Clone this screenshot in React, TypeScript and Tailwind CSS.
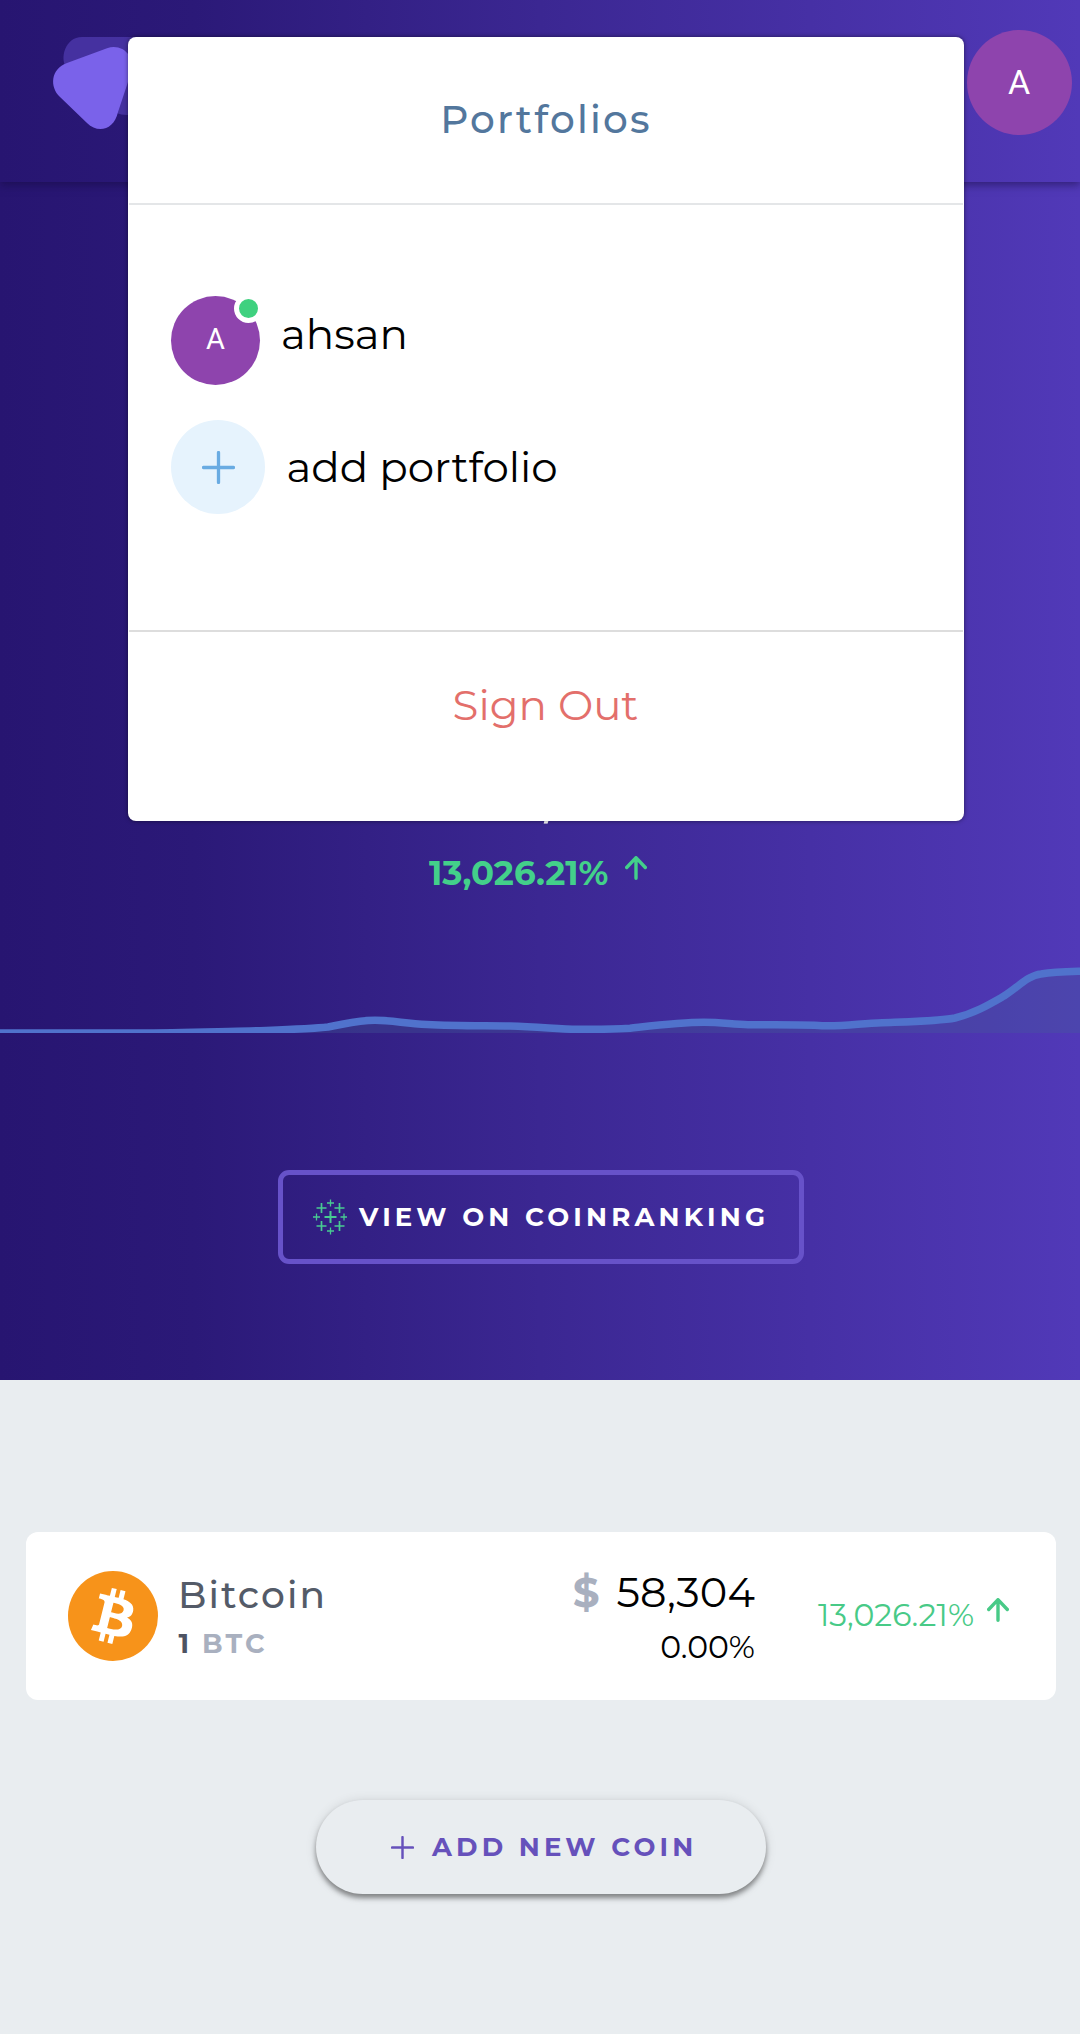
function Logo() {
  return (
    <svg className="h-[182px] w-[180px]" viewBox="0 0 180 182" fill="none">
      <path d="M82 37H150C162 37 168 45 168 57V97C168 109 160 115 150 115H127C119 115 113 112 107 106L67 69C59 59 65 37 82 37Z" fill="#4531a0" />
      <path d="M67 63L107 48.3C122 43 136 56 131 73L118 112C114 130 98 134 87 123L60 97C49.500 87 50.500 69 67 63Z" fill="#7a62ea" />
    </svg>
  );
}

function ArrowUp({ className }: { className: string }) {
  return (
    <svg className={className} viewBox="0 0 22 24" fill="none" stroke="currentColor" strokeWidth="3.4" strokeLinecap="round" strokeLinejoin="round">
      <path d="M1.7 11.5L11 1.7L20.3 11.5M11 2V22.3" />
    </svg>
  );
}

function Plus({ className, weight }: { className: string; weight: number }) {
  return (
    <svg className={className} viewBox="0 0 32 32" fill="none" stroke="currentColor" strokeWidth={weight} strokeLinecap="round">
      <path d="M16 1.5V30.5M1.5 16H30.5" />
    </svg>
  );
}

function BitcoinIcon() {
  return (
    <svg className="h-[90px] w-[90px]" viewBox="0 0 32 32">
      <circle cx="16" cy="16" r="16" fill="#f7931a" />
      <path
        fill="#fff"
        d="M23.189 14.02c.314-2.096-1.283-3.223-3.465-3.975l.708-2.84-1.728-.43-.69 2.765c-.454-.114-.92-.22-1.385-.326l.695-2.783L15.596 6l-.708 2.839c-.376-.086-.746-.17-1.104-.26l.002-.009-2.384-.595-.46 1.846s1.283.294 1.256.312c.7.175.826.638.805 1.006l-.806 3.235c.048.012.11.03.18.057l-.183-.045-1.13 4.532c-.086.212-.303.531-.793.41.018.025-1.256-.313-1.256-.313l-.858 1.978 2.25.561c.418.105.828.215 1.231.318l-.715 2.872 1.727.43.708-2.84c.472.127.93.245 1.378.357l-.706 2.828 1.728.43.715-2.866c2.948.558 5.164.333 6.097-2.333.752-2.146-.037-3.385-1.588-4.192 1.13-.26 1.98-1.003 2.207-2.538zm-3.95 5.538c-.533 2.147-4.148.986-5.32.695l.95-3.805c1.172.293 4.929.872 4.37 3.11zm.535-5.569c-.487 1.953-3.495.96-4.47.717l.86-3.45c.975.243 4.118.696 3.61 2.733z"
      />
    </svg>
  );
}

function CoinrankingIcon() {
  return (
    <svg className="h-[36px] w-[34px]" viewBox="0 0 34 36" fill="none" stroke="#48cb92">
      <path strokeWidth="2" d="M17.500 12V24M11.500 18H23.500" />
      <path strokeWidth="1.7" d="M8.500 4V14M3.500 9H13.500M26.500 4V14M21.500 9H31.500M8.500 22V32M3.500 27H13.500M26.500 22V32M21.500 27H31.500" />
      <path strokeWidth="1.3" d="M17.500 .5V7.5M14 4H21M17.500 28.5V35.5M14 32H21M3.500 14.5V21.5M0 18H7M31 14.5V21.5M27.500 18H34" />
    </svg>
  );
}

function Chart() {
  const line =
    "M-5 103H138C180 103 220 101.5 250 101C290 99.5 310 99 328 97C350 93 358 90.3 375 90.3C392 90.3 405 93.5 427 94.5C455 96 480 95.6 510 96C540 97 560 99 578 99.3C600 99.5 615 99.3 630 98.3C655 95.5 680 92.3 704 92.3C722 92.3 733 94.5 748 94.7C775 95 805 94.5 822 95.7C845 96.5 862 93 882 92.7C915 91.5 940 91 955 88C975 83 990 74 1004 66C1018 57 1028 45.5 1041 44C1055 41.5 1068 41.5 1085 41";
  return (
    <svg className="mt-[37px] block h-[103px] w-full" viewBox="0 0 1080 103" fill="none">
      <path d={`${line}V103H-5Z`} fill="#5072cc" fillOpacity="0.15" />
      <path d={`${line}V103H-5Z`} fill="#3d5b78" fillOpacity="0.18" />
      <path d={line} stroke="#5072cc" strokeWidth="7.5" />
    </svg>
  );
}

function PortfolioMenu() {
  return (
    <div className="absolute top-[37px] left-[128px] flex h-[784px] w-[836px] flex-col rounded-lg bg-white px-px shadow-[0_0_4px_rgba(0,0,0,0.5)]">
      <div className="flex h-[166px] items-center justify-center pb-[2px] text-[39px] font-medium tracking-[2.23px] text-[#53779d]">Portfolios</div>
      <div className="flex h-[429px] flex-col gap-[35px] border-t-2 border-b-2 border-t-[#e4e6e8] border-b-[#dddddd] pt-[91px] pl-[42px] text-[42px] text-black">
        <div className="flex h-[89px] items-center gap-[21px]">
          <div className="relative flex size-[89px] items-center justify-center rounded-full bg-[#8e44ad] pb-[2px] font-[Roboto] text-[29px] text-white">
            A
            <span className="absolute -top-[2px] left-[63px] size-[29px] rounded-full border-[5px] border-white bg-[#3fd17f]" />
          </div>
          <span className="pb-[13px]">ahsan</span>
        </div>
        <div className="flex h-[94px] items-center gap-[21.5px]">
          <div className="flex size-[94px] items-center justify-center rounded-full bg-[#e6f3fd] text-[#69abe2]">
            <Plus className="size-[33px]" weight={3.2} />
          </div>
          <span>add portfolio</span>
        </div>
      </div>
      <div className="flex h-[147px] items-center justify-center pr-px text-[42px] text-[#e36f6b]">Sign Out</div>
    </div>
  );
}

export default function App() {
  return (
    <div className="relative flex h-[2034px] w-[1080px] flex-col overflow-hidden bg-[#e9edf0] font-[Montserrat,Inter,sans-serif] whitespace-nowrap">
      <section className="flex h-[1380px] flex-col bg-[linear-gradient(90deg,#271571_0%,#2b1978_18%,#3b2792_50%,#5139b8_100%)]">
        <header className="flex h-[182px] shrink-0 items-start justify-between pr-[8px] shadow-[0_3px_8px_rgba(20,10,60,0.5)]">
          <Logo />
          <div className="mt-[30px] flex size-[105px] items-center justify-center rounded-full bg-[#8e44ad] pr-px pb-px font-[Roboto] text-[34px] text-white">A</div>
        </header>
        <div className="mt-[562px] flex h-[80px] items-center gap-[36px] pl-[355px] text-[80px] leading-[80px] text-white">
          <span className="font-bold">$</span>
          <span>58,304</span>
        </div>
        <div className="mt-[29px] flex h-[40px] pl-[429px] text-[34px] leading-[40px] font-bold text-[#43d08a]">
          <span>13,026.21%</span>
          <ArrowUp className="mt-[3px] ml-[17px] h-[24px] w-[22px]" />
        </div>
        <Chart />
        <button className="mt-[137px] ml-[278px] flex h-[94px] w-[526px] items-center gap-[12px] rounded-[11px] border-5 border-[#6752c9] pl-[30px] text-[26px] font-bold tracking-[4.17px] text-white">
          <CoinrankingIcon />
          <span>VIEW ON COINRANKING</span>
        </button>
      </section>

      <div className="mt-[152px] ml-[26px] flex h-[168px] w-[1030px] items-start rounded-xl bg-white pr-[47px] pl-[42px]">
        <div className="mt-[39px]">
          <BitcoinIcon />
        </div>
        <div className="mt-[40px] ml-[20px]">
          <div className="text-[37.5px] leading-[46px] font-medium tracking-[2.1px] text-[#545b68]">Bitcoin</div>
          <div className="mt-[9px] flex gap-[13px] pl-[0.5px] text-[27px] leading-[34px] font-bold text-[#a9b0bf]">
            <span className="text-[#4d5362]">1</span>
            <span className="tracking-[3.1px]">BTC</span>
          </div>
        </div>
        <div className="mt-[37px] ml-auto flex flex-col items-end text-black">
          <div className="flex gap-[17px] text-[41.5px] leading-[46px]">
            <span className="text-[42px] font-bold text-[#a9b0bf]">$</span>
            <span className="tracking-[0.1px]">58,304</span>
          </div>
          <div className="mt-[15px] text-[31.5px] leading-[34px]">0.00%</div>
        </div>
        <div className="mt-[66px] ml-[63px] flex text-[31.5px] leading-[34px] text-[#48ca87]">
          <span>13,026.21%</span>
          <ArrowUp className="ml-[13px] h-[24px] w-[22px]" />
        </div>
      </div>

      <button className="mt-[100px] ml-[316px] flex h-[94px] w-[450px] items-center gap-[18px] rounded-full bg-[#e9edf0] pl-[75px] text-[26px] font-bold tracking-[4.15px] text-[#6651bb] shadow-[0_4px_5px_rgba(0,0,0,0.4),0_1px_12px_rgba(0,0,0,0.12)]">
        <Plus className="size-[23px]" weight={3.4} />
        <span>ADD NEW COIN</span>
      </button>

      <PortfolioMenu />
    </div>
  );
}
